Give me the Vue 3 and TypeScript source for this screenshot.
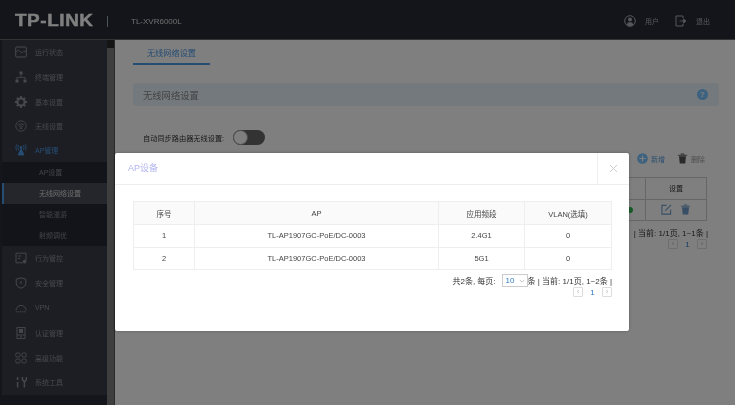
<script setup lang="ts">
interface NavItem { label: string; icon: string; active?: boolean }
const topNav: NavItem[] = [
  { label: '运行状态', icon: 'status' },
  { label: '终端管理', icon: 'tree' },
  { label: '基本设置', icon: 'gear' },
  { label: '无线设置', icon: 'wifi' },
]
const subNav = ['AP设置', '无线网络设置', '智能漫游', '射频调优']
const bottomNav: NavItem[] = [
  { label: '行为管控', icon: 'behavior' },
  { label: '安全管理', icon: 'shield' },
  { label: 'VPN', icon: 'vpn' },
  { label: '认证管理', icon: 'auth' },
  { label: '高级功能', icon: 'adv' },
  { label: '系统工具', icon: 'tools' },
]
const rows = [
  { id: 1, ap: 'TL-AP1907GC-PoE/DC-0003', band: '2.4G1', vlan: 0 },
  { id: 2, ap: 'TL-AP1907GC-PoE/DC-0003', band: '5G1', vlan: 0 },
]
</script>

<template>
  <div class="page">
    <header class="top">
      <span class="logo"><span class="logo-text">TP-LINK</span></span>
      <span class="logo-sep"></span>
      <span class="model">TL-XVR6000L</span>
      <span class="spacer"></span>
      <svg class="ticon" viewBox="0 0 12 12"><circle cx="6" cy="6" r="5.3" fill="none" stroke="currentColor" stroke-width="1"/><circle cx="6" cy="4.6" r="2" fill="currentColor"/><path d="M2.6 9.6c.6-1.8 1.9-2.4 3.4-2.4s2.8.6 3.4 2.4A5 5 0 0 1 2.6 9.6z" fill="currentColor"/></svg>
      <span class="tlabel user">用户</span>
      <svg class="ticon" viewBox="0 0 12 12"><path d="M8 3V1H1v10h7V9" fill="none" stroke="currentColor" stroke-width="1"/><path d="M4.5 6h4.7M8.4 3.8L11 6 8.4 8.2z" fill="currentColor" stroke="currentColor" stroke-width=".8"/></svg>
      <span class="tlabel">退出</span>
    </header>
    <div class="body">
      <aside class="side">
        <nav class="nav">
          <div v-for="n in topNav" :key="n.label" class="nav-item">
            <svg class="nicon" viewBox="0 0 12 12">
              <g v-if="n.icon === 'status'" fill="none" stroke="currentColor"><rect x=".7" y="1" width="10.6" height="10" rx="1"/><path d="M1 6l2.5-2 3 3 2-1.5H11" stroke-width=".8"/></g>
              <g v-else-if="n.icon === 'tree'" fill="currentColor"><rect x="4.5" y=".5" width="3" height="3"/><rect x=".5" y="8.5" width="3" height="3"/><rect x="8.5" y="8.5" width="3" height="3"/><path d="M5.6 3.5h.8V6H10.4v2.5h-.8V6.8H2.4v1.7h-.8V6h4z"/></g>
              <g v-else-if="n.icon === 'gear'"><circle cx="6" cy="6" r="3.6" fill="none" stroke="currentColor" stroke-width="2.2"/><path d="M6 0v2.4M6 9.6V12M0 6h2.4M9.6 6H12M1.8 1.8l1.7 1.7M8.5 8.5l1.7 1.7M10.2 1.8L8.5 3.5M3.5 8.5l-1.7 1.7" stroke="currentColor" stroke-width="1.8"/></g>
              <g v-else fill="none" stroke="currentColor"><circle cx="6" cy="6" r="5.2" stroke-width=".8"/><path d="M3 5a4.4 4.4 0 0 1 6 0M4.2 6.6a2.6 2.6 0 0 1 3.6 0" stroke-width=".8"/><circle cx="6" cy="8.2" r=".6" fill="currentColor"/></g>
            </svg>
            <span>{{ n.label }}</span>
          </div>
          <div class="nav-item active">
            <svg class="nicon" viewBox="0 0 12 12" fill="none" stroke="currentColor" stroke-width=".8"><path d="M3.6 1a5 5 0 0 0 0 5M8.4 1a5 5 0 0 1 0 5M1.6.4a7 7 0 0 0 0 6.2M10.4.4a7 7 0 0 1 0 6.2"/><circle cx="6" cy="3.4" r="1" fill="currentColor"/><path d="M6 4.5L3 11h6z" fill="currentColor"/></svg>
            <span>AP管理</span>
          </div>
          <div class="sub">
            <div v-for="(s, i) in subNav" :key="s" class="sub-item" :class="{ current: i === 1 }">{{ s }}</div>
          </div>
          <div v-for="n in bottomNav" :key="n.label" class="nav-item">
            <svg class="nicon" viewBox="0 0 12 12">
              <g v-if="n.icon === 'behavior'" fill="none" stroke="currentColor" stroke-width=".9"><path d="M11 8V1.2H1v9.6h7"/><path d="M3 4h3M3 6.5h2"/><circle cx="9.6" cy="9.6" r="1.4" fill="currentColor"/></g>
              <path v-else-if="n.icon === 'shield'" d="M6 .8l4.8 1.4v4c0 2.6-2.2 4.2-4.8 5-2.6-.8-4.8-2.4-4.8-5v-4zM6 4v3" fill="none" stroke="currentColor"/>
              <g v-else-if="n.icon === 'vpn'" fill="none" stroke="currentColor" stroke-width=".9"><path d="M1 8.4a5 5 0 0 1 10 0"/><path d="M1 9.8h10" stroke-dasharray="1.4 .6"/></g>
              <g v-else-if="n.icon === 'auth'" fill="none" stroke="currentColor" stroke-width=".9"><rect x="2" y=".6" width="8" height="10.8"/><rect x="4.4" y="2.4" width="3.2" height="3" fill="currentColor"/><path d="M2 8h8M5 9.8h2"/></g>
              <g v-else-if="n.icon === 'adv'" fill="none" stroke="currentColor" stroke-width=".9"><rect x=".7" y="1" width="4.4" height="4" rx="1.4"/><rect x="6.9" y="1" width="4.4" height="4" rx="1.4"/><rect x=".7" y="7" width="4.4" height="4" rx="1.4"/><rect x="6.9" y="7" width="4.4" height="4" rx="1.4"/></g>
              <g v-else fill="none" stroke="currentColor" stroke-width="1.5"><path d="M2.6 1v3M2.6 6v5.6M7.4 1v2.6L9.4 6l2-2.4V1M9.4 6v5.6" /></g>
            </svg>
            <span>{{ n.label }}</span>
          </div>
        </nav>
        <div class="scroll"><span class="scroll-up"></span></div>
      </aside>
      <main class="main">
        <div class="tabs"><span class="tab">无线网络设置</span></div>
        <div class="section-bar">
          <span>无线网络设置</span>
          <span class="help">?</span>
        </div>
        <div class="toggle-row">
          <span>自动同步路由器无线设置:</span>
          <span class="toggle"><span class="knob"></span></span>
        </div>
        <div class="actions">
          <svg class="a-icon" viewBox="0 0 12 12"><circle cx="6" cy="6" r="5.8" fill="#78c4ff"/><path d="M6 2.6v6.8M2.6 6h6.8" stroke="#fff" stroke-width="1.3"/></svg>
          <span class="a-blue">新增</span>
          <svg class="a-icon" viewBox="0 0 12 12"><path d="M1 2.5h10M4.5 2V1h3v1" fill="none" stroke="#555" stroke-width="1"/><path d="M2.2 3.6h7.6L9 11.4H3z" fill="#555"/></svg>
          <span>删除</span>
        </div>
        <div class="bg-table">
          <div class="bg-row head"><span class="bg-c1"></span><span class="bg-c2">设置</span></div>
          <div class="bg-row">
            <span class="bg-c1"><i class="dot"></i></span>
            <span class="bg-c2 edit">
              <svg viewBox="0 0 12 12" fill="none" stroke="#6f9cc8" stroke-width="1.2"><path d="M6 1.5H1v9.5h9.5V6"/><path d="M4.5 7.5l6.5-6.5"/></svg>
              <svg viewBox="0 0 12 12"><path d="M1 2.5h10M4.5 2V1h3v1" fill="none" stroke="#6f9cc8" stroke-width="1"/><path d="M2.2 3.6h7.6L9 11.4H3z" fill="#6f9cc8"/></svg>
            </span>
          </div>
        </div>
        <div class="bg-pager">| 当前: 1/1页, 1~1条 |</div>
        <div class="bg-pages"><span class="pg">‹</span><span class="num">1</span><span class="pg">›</span></div>
      </main>
    </div>
    <div class="overlay"></div>
    <section class="dialog">
      <div class="d-head">
        <span class="d-title">AP设备</span>
        <button class="d-close" type="button" aria-label="关闭">
          <svg viewBox="0 0 10 10"><path d="M1 1l8 8M9 1l-8 8" stroke="#c8c8c8" stroke-width="1"/></svg>
        </button>
      </div>
      <div class="d-body">
        <table class="tbl">
          <thead>
            <tr><th class="c-a">序号</th><th>AP</th><th class="c-b">应用频段</th><th class="c-c">VLAN(选填)</th></tr>
          </thead>
          <tbody>
            <tr v-for="r in rows" :key="r.id">
              <td>{{ r.id }}</td><td>{{ r.ap }}</td><td>{{ r.band }}</td><td>{{ r.vlan }}</td>
            </tr>
          </tbody>
        </table>
        <div class="pager">
          <span>共2条, 每页:</span>
          <span class="select">10<svg viewBox="0 0 8 5"><path d="M1 1l3 3 3-3" fill="none" stroke="#999" stroke-width=".8"/></svg></span>
          <span>条 | 当前: 1/1页, 1~2条 |</span>
        </div>
        <div class="pages"><span class="pg">‹</span><span class="num">1</span><span class="pg">›</span></div>
      </div>
    </section>
  </div>
</template>

<style scoped>
.page {
  position: relative;
  width: 735px;
  height: 405px;
  overflow: hidden;
  background: #fff;
  font-family: "Liberation Sans", "Noto Sans CJK SC", sans-serif;
  font-size: 7px;
  color: #333;
  filter: blur(0.45px);
}
.top {
  height: 40px;
  background: #282a35;
  display: flex;
  align-items: center;
  color: #aaaeb6;
  padding: 3px 25px 0 15px;
  border-bottom: 1px solid #666;
  box-sizing: border-box;
}
.logo { width: 80px; }
.logo-text { display: inline-block; font: 900 16px "Liberation Sans", sans-serif; color: #fff; letter-spacing: .5px; -webkit-text-stroke: .4px #fff; transform: scaleX(1.18); transform-origin: left center; }
.logo-sep { width: 1px; height: 11px; background: #9aa; margin: 0 23px 0 12px; }
.model { font-size: 8px; color: #ddd; }
.spacer { flex: 1; }
.ticon { width: 12px; height: 12px; margin-right: 9px; }
.tlabel { font-size: 7px; }
.user { margin-right: 16px; }
.body { display: flex; height: 365px; }
.side { width: 115px; display: flex; background: #2a2c36; flex: none; box-sizing: border-box; border-right: 1px solid #555; padding-left: 2px; }
.nav { width: 105px; color: #8e9199; margin-top: -0.4px; }
.nav-item { height: 24.8px; display: flex; align-items: center; padding-left: 13px; gap: 8px; background: #3a3d49; }
.nav-item.active { color: #4d9ae6; height: 23.2px; }
.nicon { width: 12px; height: 12px; flex: none; }
.sub { background: #272932; }
.sub-item { height: 21px; line-height: 21px; padding-left: 37px; color: #85888f; }
.sub-item.current { background: #4a4c58; color: #dcdcdc; box-shadow: inset 2px 0 0 #4d9ae6; }
.scroll { width: 7px; background: #7c7c7c; }
.scroll-up { display: block; height: 8px; background: #2a2a2a; }
.main { flex: 1; position: relative; background: #fff; padding: 0 16px 0 18px; box-sizing: border-box; }
.tabs { height: 25px; display: flex; align-items: flex-end; }
.tab { color: #4d9ae6; font-size: 8.2px; padding: 0 0 5px 0; width: 77px; text-align: center; border-bottom: 2px solid #4d9ae6; }
.section-bar { margin-top: 18px; height: 23px; background: #e8f3fa; border-radius: 3px; display: flex; justify-content: space-between; align-items: center; padding: 0 11px 0 10px; font-size: 9.3px; color: #888; }
.help { width: 11px; height: 11px; border-radius: 50%; background: #78c4ff; color: #fff; font: bold 8px/11px "Liberation Sans", sans-serif; text-align: center; }
.toggle-row { margin-top: 24px; padding-left: 10px; display: flex; align-items: center; gap: 9px; font-size: 7.2px; }
.toggle { width: 32px; height: 15px; background: #666; border-radius: 8px; display: block; position: relative; }
.knob { position: absolute; left: 0; top: 0; width: 15px; height: 15px; border-radius: 50%; background: #fff; border: 1px solid #999; box-sizing: border-box; }
.actions { position: absolute; left: 522px; top: 113px; display: flex; align-items: center; gap: 3px; font-size: 7px; color: #999; }
.a-icon { width: 11px; height: 11px; }
.a-blue { color: #5aa0e0; margin-right: 9px; }
.bg-table { position: absolute; right: 28px; top: 137px; width: 212px; border: 1px solid #ccc; box-sizing: border-box; }
.bg-row { display: flex; height: 20.5px; }
.bg-row.head { border-bottom: 1px solid #ccc; font-size: 7px; }
.bg-c1 { flex: 1; display: flex; align-items: center; justify-content: flex-end; }
.bg-c2 { width: 60px; border-left: 1px solid #ccc; display: flex; align-items: center; justify-content: center; gap: 8px; }
.dot { width: 6px; height: 6px; border-radius: 50%; background: #2db84d; margin-right: 12px; }
.edit svg { width: 11px; height: 11px; }
.bg-pager { position: absolute; right: 27px; top: 187px; font-size: 8px; white-space: nowrap; }
.bg-pages { position: absolute; right: 28px; top: 199px; display: flex; align-items: center; }
.overlay { position: absolute; inset: 0; background: rgba(0,0,0,.5); }
.dialog { position: absolute; left: 115px; top: 153px; width: 514px; height: 178px; background: #fff; border-radius: 2px; box-shadow: 0 0 3px rgba(0,0,0,.3); }
.d-head { height: 32px; border-bottom: 1px solid #eee; display: flex; justify-content: space-between; align-items: stretch; box-sizing: border-box; }
.d-title { padding-left: 13px; line-height: 31px; color: #b0b4ee; font-size: 9px; }
.d-close { width: 32px; padding: 0; background: none; border: 0; border-left: 1px solid #eee; display: flex; align-items: center; justify-content: center; }
.d-close svg { width: 9px; height: 9px; }
.d-body { padding: 16px 17px 0 18px; }
.tbl { width: 479px; border-collapse: collapse; border: 1.5px solid #eee; font-size: 7.5px; color: #444; table-layout: fixed; }
.tbl th { height: 22px; background: #fafafa; font-weight: 400; border: 1px solid #eee; padding: 0; }
.tbl td { height: 21.5px; text-align: center; border: 1px solid #eee; padding: 0; }
.c-a { width: 60px; }
.c-b { width: 85px; }
.c-c { width: 86px; }
.pager { display: flex; justify-content: flex-end; align-items: center; font-size: 8px; margin-top: 4px; width: 479px; }
.pager > span:first-child { margin-right: 6px; }
.select { width: 26px; height: 13px; border: 1px solid #ccc; display: flex; align-items: center; justify-content: space-between; padding: 0 2px 0 3px; box-sizing: border-box; font-size: 8px; color: #2f7cc4; }
.select svg { width: 6px; height: 4px; }
.pages { display: flex; justify-content: flex-end; align-items: center; width: 479px; }
.pg { width: 10px; height: 10px; border: 1px solid #ddd; color: #bbb; font-size: 8px; line-height: 8px; text-align: center; box-sizing: border-box; border-radius: 1px; }
.num { width: 19px; text-align: center; font-size: 8px; color: #2f7cc4; }
</style>
